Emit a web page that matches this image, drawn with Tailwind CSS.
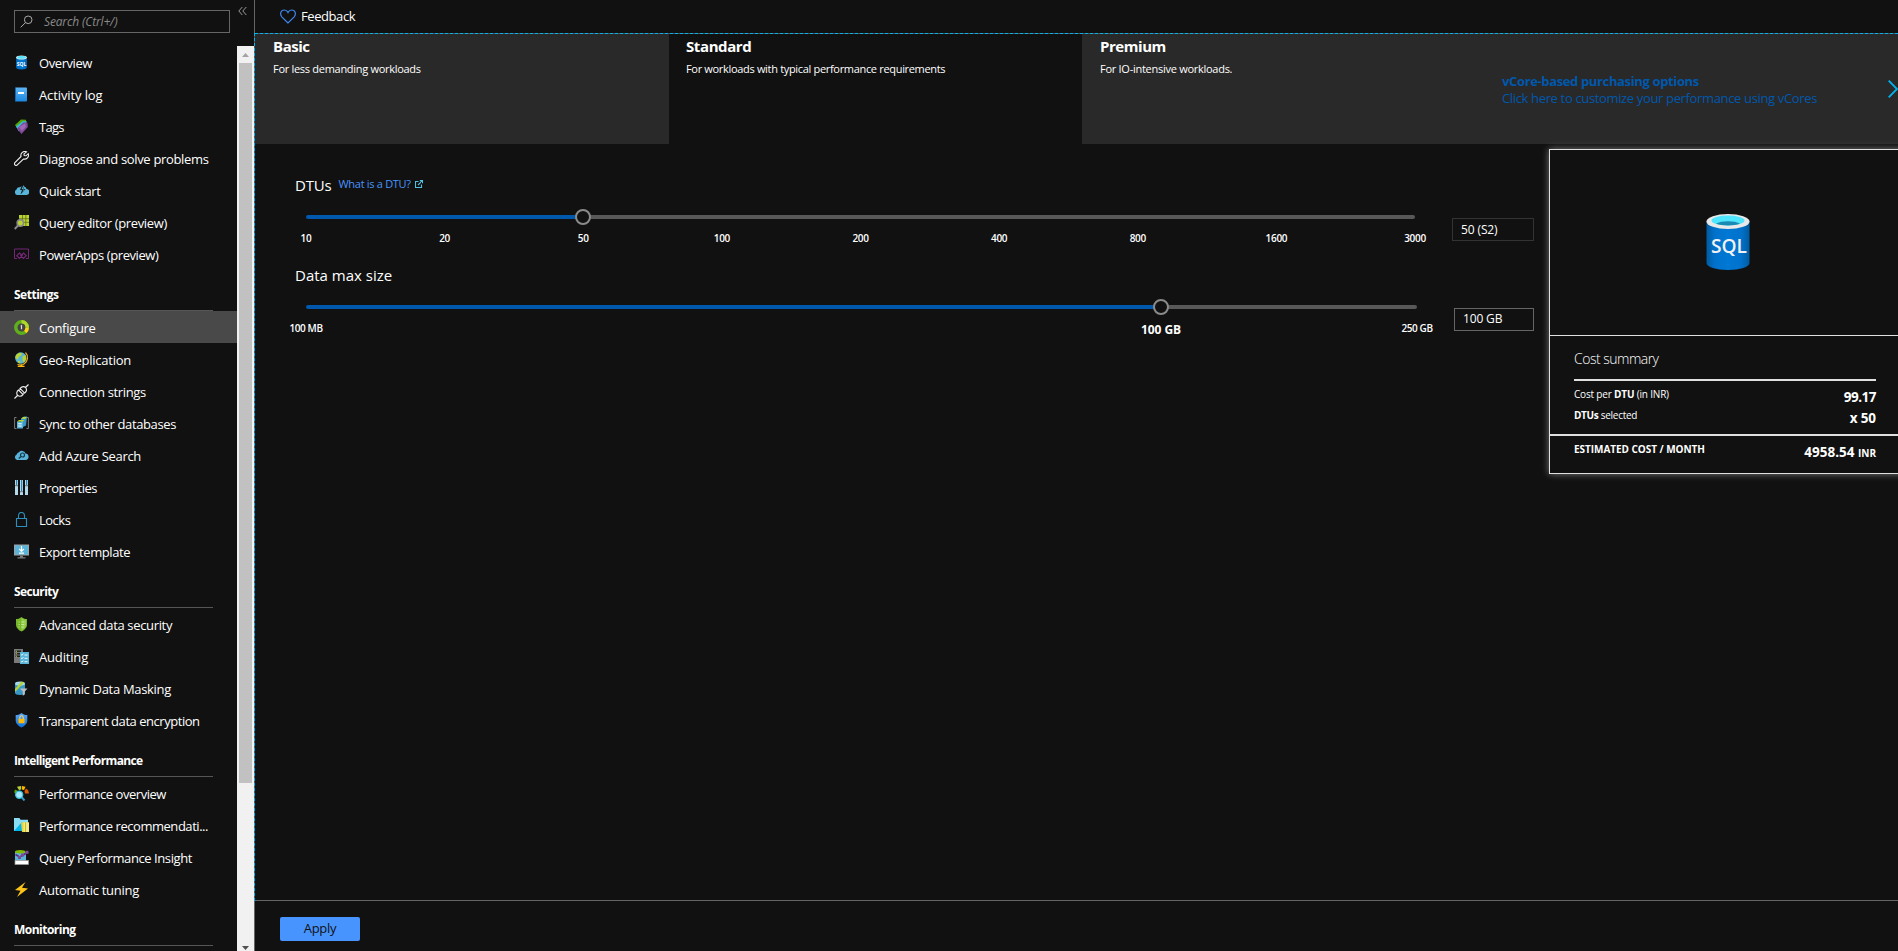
<!DOCTYPE html>
<html lang="en">
<head>
<meta charset="utf-8">
<title>Configure</title>
<script src="https://cdn.jsdelivr.net/npm/@tailwindcss/browser@4"></script>
</head>
<body class="h-[951px] w-[1898px] overflow-hidden bg-[#111] font-['Open_Sans','Noto_Sans',sans-serif] text-[13px] text-white">
<svg class="absolute size-0">
  <defs>
    <linearGradient id="cyl"><stop offset="0" stop-color="#005ba1"/><stop offset=".2" stop-color="#0072cc"/><stop offset=".5" stop-color="#0078d4"/><stop offset=".8" stop-color="#0072cc"/><stop offset="1" stop-color="#005ba1"/></linearGradient>
    <linearGradient id="blue" x2="0" y2="1"><stop offset="0" stop-color="#5eb5f5"/><stop offset="1" stop-color="#1b86df"/></linearGradient>
    <linearGradient id="shield" x2="0" y2="1"><stop offset="0" stop-color="#5ea8f5"/><stop offset="1" stop-color="#0b6fd8"/></linearGradient>
  </defs>
</svg>
<div class="flex h-full">
  <nav class="flex w-[254px] shrink-0 flex-col">
    <div class="flex h-[46px] shrink-0 items-start">
      <div class="mt-[10px] ml-[14px] flex h-[23px] w-[216px] items-center border border-[#666] pl-[5px]">
        <svg class="size-[13px]" viewBox="0 0 13 13" fill="none" stroke="#aaa"><circle cx="8.2" cy="4.8" r="3.8"/><path d="M5.5 7.6L.7 12.3"/></svg>
        <span class="ml-[11px] text-[12px] italic tracking-[-0.15px] text-[#8a8a8a]">Search (Ctrl+/)</span>
      </div>
      <svg class="mt-[6px] ml-[8px] h-[10px] w-[9px]" viewBox="0 0 9 10" fill="none" stroke="#999"><path d="M4.3 1L.8 5l3.500 4M8.300 1L4.800 5l3.500 4"/></svg>
    </div>
    <div class="flex min-h-0 flex-1">
      <div class="w-[237px] shrink-0 overflow-hidden whitespace-nowrap [&_svg]:mr-[10px] [&_svg]:size-[15px] [&_svg]:shrink-0">
        <div class="flex h-8 items-center pl-[14px]">
          <svg viewBox="0 0 15 15"><path d="M2 2.500v10c0 1.200 2.400 2 5.500 2s5.500-.8 5.500-2v-10z" fill="url(#cyl)"/><ellipse cx="7.500" cy="2.500" rx="5.500" ry="2" fill="#e8e8e8"/><ellipse cx="7.500" cy="2.400" rx="4.300" ry="1.300" fill="#50e6ff"/><text x="7.500" y="10.600" font-size="5" font-weight="700" fill="#fff" text-anchor="middle">SQL</text></svg>
          <span class="pt-[3px] tracking-[-0.42px]">Overview</span></div>
        <div class="flex h-8 items-center pl-[14px]">
          <svg viewBox="0 0 15 15"><rect x="1" y=".5" width="12" height="14" rx="1" fill="url(#blue)"/><path d="M1 1.500v12q0 1 1 1V.5Q1 .5 1 1.500z" fill="#0f6cbd"/><rect x="4" y="5" width="6" height="2" fill="#fff"/></svg>
          <span class="pt-[3px] tracking-[-0.11px]">Activity log</span></div>
        <div class="flex h-8 items-center pl-[14px]">
          <svg viewBox="0 0 15 15"><path d="M1 6L7 .5l5 .2.3 3L5 12z" fill="#57a300"/><path d="M2 7.500L9 2l4 .5L5 12.500z" fill="#32bedd"/><path d="M3 9.500L9.500 3.300l4 .4.300 4.300L7.500 15z" fill="#804998"/><path d="M5 8l6-3.500 1 3L8 12z" fill="#a067b8"/></svg>
          <span class="pt-[3px] tracking-[-0.7px]">Tags</span></div>
        <div class="flex h-8 items-center pl-[14px]">
          <svg viewBox="0 0 15 15" fill="none" stroke="#eee" stroke-width="1.100"><path d="M12.500.8A4 4 0 0 0 7 5.500L.9 11.600a1.600 1.600 0 0 0 2.400 2.300L9.400 8A4 4 0 0 0 14.200 2.700L12 4.800l-1.800-.2L10 2.900z"/></svg>
          <span class="pt-[3px] tracking-[-0.33px]">Diagnose and solve problems</span></div>
        <div class="flex h-8 items-center pl-[14px]">
          <svg viewBox="0 0 15 15"><path d="M3 12a3 3 0 0 1-.500-5.500A3 3 0 0 1 6 4.300 4 4 0 0 1 12.600 6 3 3 0 0 1 12 12z" fill="#59b4d9"/><path d="M8.500 1.500L6 7h2l-1.500 4.500L11.500 6H9.300L11 1.500z" fill="#111"/><path d="M9.300 2.500L7.500 6.200h1.800L8.300 9l2.200-2.500H8.800L10.200 2.500z" fill="#59b4d9"/></svg>
          <span class="pt-[3px] tracking-[-0.39px]">Quick start</span></div>
        <div class="flex h-8 items-center pl-[14px]">
          <svg viewBox="0 0 15 15"><path d="M5 0h10v11H5z" fill="#b8d432"/><path d="M8.500 0v11M11.800 0v11M5 3.700h10M5 7.300h10" stroke="#5f7015" stroke-width=".8"/><circle cx="6.300" cy="8" r="3.200" fill="#b8d432" stroke="#888" stroke-width="1.500"/><path d="M4 10.500L.7 14" stroke="#888" stroke-width="2"/></svg>
          <span class="pt-[3px] tracking-[-0.35px]">Query editor (preview)</span></div>
        <div class="flex h-8 items-center pl-[14px]">
          <svg viewBox="0 0 15 15" fill="none" stroke="#742774" stroke-width="1"><path d="M3 11.500H.5v-9.500h14v9.500H12"/><path d="M5.500 6L8.200 8.700 5.500 11.400 2.800 8.700zM9.500 6l2.700 2.700-2.700 2.700-2.700-2.700z" stroke-width="1.200"/></svg>
          <span class="pt-[3px] tracking-[-0.42px]">PowerApps (preview)</span></div>

        <div class="ml-[14px] flex h-[41px] w-[199px] items-center border-b border-[#555] pt-[9px] text-[12px] font-bold tracking-[-0.49px]">Settings</div>
        <div class="flex h-8 items-center bg-[#494949] pl-[14px]">
          <svg viewBox="0 0 15 15" fill="none"><circle cx="7.500" cy="7.500" r="5.700" stroke="#5fae1b" stroke-width="3.600"/><path d="M7.500 1.800a5.700 5.700 0 0 1 5.700 5.700" stroke="#b0d62b" stroke-width="3.600"/><path d="M13.200 7.500a5.700 5.700 0 0 1-2 4.300" stroke="#fcd116" stroke-width="3.600"/><circle cx="7.500" cy="7.500" r="3.700" fill="#444"/><path d="M6.700 6.200l.8-.5v3.600" stroke="#ddd" stroke-width="1.200"/></svg>
          <span class="pt-[3px] tracking-[-0.3px]">Configure</span></div>
        <div class="flex h-8 items-center pl-[14px]">
          <svg viewBox="0 0 15 15"><circle cx="6.800" cy="6" r="5.700" fill="#59b4d9"/><path d="M2 3l3-2.300 3 .5-1 2.500-2 .8-1 3L1.300 6zM8.500 4.500l3-1.500.7 4-2.200 3.500-1.500-2zM4 8.500l2.500 1-.5 2-2-.8z" fill="#b8d432"/><path d="M11.500.5a7.500 7.500 0 0 1-1.500 11.500 6 6 0 0 1-6.500.3" fill="none" stroke="#e8a817" stroke-width="1.200"/><path d="M6.500 12.500h1.500v1.300h2.500v1.200h-6.800v-1.200h2.800z" fill="#fcb813"/></svg>
          <span class="pt-[3px] tracking-[-0.25px]">Geo-Replication</span></div>
        <div class="flex h-8 items-center pl-[14px]">
          <svg viewBox="0 0 15 15" fill="none" stroke="#eee" stroke-width="1.100"><path d="M.5 14.500l3-3M11.500 3.500l3-3M4.500 6l4.600 4.600c-1.600 1.700-4 2-5.600.7-1.300-1.600-.9-3.800 1-5.300zM6 4.400c1.800-1.900 4.200-2 5.600-.9 1.200 1.500 1 3.900-.9 5.600zM5.500 5.800l1.500-1M9.400 9.500l1.200-1.200"/></svg>
          <span class="pt-[3px] tracking-[-0.35px]">Connection strings</span></div>
        <div class="flex h-8 items-center pl-[14px]">
          <svg viewBox="0 0 15 15"><path d="M2.500 1.500H.6v11h1.900M12.500 1.500h1.900v11h-1.900" fill="none" stroke="#7a7a7a" stroke-width="1"/><path d="M7 2.500l3-2h3l-1 9-3 1.500H6.500z" fill="#3999c6"/><path d="M7 2.700L9 1h3.800L11 3z" fill="#b8d432"/><path d="M3 5.500h6v7H3z" fill="#59b4d9"/><path d="M3 5.500L5 4h5.300L9 5.500z" fill="#b8d432"/><path d="M4.200 7.800h3.500M4.200 10h3.500" stroke="#fff"/></svg>
          <span class="pt-[3px] tracking-[-0.36px]">Sync to other databases</span></div>
        <div class="flex h-8 items-center pl-[14px]">
          <svg viewBox="0 0 15 15"><path d="M3 12a3 3 0 0 1-.300-5.600A3 3 0 0 1 5 4.300 3.700 3.700 0 0 1 11.500 5.500 3.300 3.300 0 0 1 12 12z" fill="#59b4d9"/><circle cx="8.500" cy="7" r="2" fill="none" stroke="#15394a" stroke-width="1.200"/><path d="M7 8.500L4.800 10.500" stroke="#15394a" stroke-width="1.400"/></svg>
          <span class="pt-[3px] tracking-[-0.31px]">Add Azure Search</span></div>
        <div class="flex h-8 items-center pl-[14px]">
          <svg viewBox="0 0 15 15"><path d="M1 0h3v15H1zM6 0h3v15H6zM11 0h3v15h-3z" fill="#b5d9ea"/><path d="M2 0h1.200v5H2zM7 0h1.200v11H7zM12 0h1.200v5H12z" fill="#2c86b3"/><path d="M1 5h3v1.300H1zM6 11h3v1.300H6zM11 5h3v1.300h-3z" fill="#7a8a92"/></svg>
          <span class="pt-[3px] tracking-[-0.49px]">Properties</span></div>
        <div class="flex h-8 items-center pl-[14px]">
          <svg viewBox="0 0 15 15" fill="none" stroke="#2d8fbd" stroke-width="1.100"><path d="M2.500 6.500h10v8h-10zM4.500 6.500V4q0-3.500 3-3.500t3 3.500v2.500"/></svg>
          <span class="pt-[3px] tracking-[-0.5px]">Locks</span></div>
        <div class="flex h-8 items-center pl-[14px]">
          <svg viewBox="0 0 15 15"><path d="M0 .5h15v11H0z" fill="#a0a1a2"/><path d="M1 1.500h13v9H1z" fill="#59b4d9"/><path d="M7.500 2v5M5.200 5l2.300 2.300L9.800 5M5 9.200h5" fill="none" stroke="#fff" stroke-width="1.200"/><path d="M6 11.500h3v1.700h2.500v1.300h-8v-1.300H6z" fill="#7a7a7a"/></svg>
          <span class="pt-[3px] tracking-[-0.43px]">Export template</span></div>

        <div class="ml-[14px] flex h-[41px] w-[199px] items-center border-b border-[#555] pt-[9px] text-[12px] font-bold tracking-[-0.6px]">Security</div>
        <div class="flex h-8 items-center pl-[14px]">
          <svg viewBox="0 0 15 15"><path d="M7.500 0C9.500 1.800 11.500 2 13 2v5.500c0 3.500-3 5.800-5.500 7C5 13.300 2 11 2 7.500V2c1.500 0 3.500-.2 5.500-2z" fill="#76b82a"/><path d="M7.500 1C9 2.300 10.700 2.700 12 2.800v4.700c0 2.900-2.500 4.900-4.500 5.900z" fill="#96cc4b"/><path d="M7.300 5h3M7.300 7.500h3M7.300 10h2.500M4.600 5h1M4.600 7.500h1M4.600 10h1" stroke="#c8e89a"/></svg>
          <span class="pt-[3px] tracking-[-0.34px]">Advanced data security</span></div>
        <div class="flex h-8 items-center pl-[14px]">
          <svg viewBox="0 0 15 15"><path d="M0 0h9v14H0z" fill="#7a7a7a"/><path d="M1.500 1.500h5.500v1.500H1.500zM1.500 4h5.500v1.500H1.500zM1.500 6.500h5v1.500h-5z" fill="#222"/><path d="M2 1.800h1v1H2zM2 4.300h1v1H2zM2 6.800h1v1H2z" fill="#b8d432"/><path d="M6 3h9v12H6z" fill="#59b4d9"/><path d="M7.200 5.500l.8.800 1.300-1.600M7.200 9l.8.800 1.300-1.600M7.200 12.400l.8.800 1.300-1.600M10.500 6h3M10.500 9.300h3M10.500 12.700h3" fill="none" stroke="#fff" stroke-width=".9"/></svg>
          <span class="pt-[3px] tracking-[-0.17px]">Auditing</span></div>
        <div class="flex h-8 items-center pl-[14px]">
          <svg viewBox="0 0 15 15"><path d="M1 2.500v9.500c0 1.300 2.200 2 5 2s5-.7 5-2V2.500z" fill="#3999c6"/><ellipse cx="6" cy="2.500" rx="5" ry="2" fill="#a5d8ee"/><path d="M1 8l6.500-7.500 2.500 1L3 9 1 11z" fill="#b8d432"/><path d="M6 7.500h7.500L10.800 10.500v3l-2 1.300v-4.300z" fill="#bcbec0"/></svg>
          <span class="pt-[3px] tracking-[-0.31px]">Dynamic Data Masking</span></div>
        <div class="flex h-8 items-center pl-[14px]">
          <svg viewBox="0 0 15 15"><path d="M7.500 0C9.500 1.800 11.500 2 13.300 2v5.500c0 3.500-3.300 5.800-5.800 7C5 13.300 1.700 11 1.700 7.500V2C3.500 2 5.500 1.800 7.500 0z" fill="url(#shield)"/><path d="M5.800 6V4.700q0-1.900 1.700-1.900t1.700 1.900V6" fill="none" stroke="#ffd76e" stroke-width="1.100"/><rect x="4.500" y="5.800" width="6" height="4.500" rx=".5" fill="#ffb900"/></svg>
          <span class="pt-[3px] tracking-[-0.46px]">Transparent data encryption</span></div>

        <div class="ml-[14px] flex h-[41px] w-[199px] items-center border-b border-[#555] pt-[9px] text-[12px] font-bold tracking-[-0.63px]">Intelligent Performance</div>
        <div class="flex h-8 items-center pl-[14px]">
          <svg viewBox="0 0 15 15"><path d="M0 6.500l1-3 2.500 1.300-.8 2.700z" fill="#57a300"/><path d="M3 .8L7 0v3.500L5 4z" fill="#b8d432"/><path d="M7.800 0l3.700.8L10 4l-2.200-.5z" fill="#ffb900"/><path d="M12 2.500l2.200 1.800L15 7.500h-4L10.500 5z" fill="#dd5900"/><path d="M7.500 11l3 3.500" stroke="#3999c6" stroke-width="2"/><circle cx="5.200" cy="8.700" r="3.600" fill="#a5e5fb" stroke="#32bedd" stroke-width="1.200"/></svg>
          <span class="pt-[3px] tracking-[-0.46px]">Performance overview</span></div>
        <div class="flex h-8 items-center pl-[14px]">
          <svg viewBox="0 0 15 15"><path d="M0 0h5.500l1 1.700H14V13H0z" fill="#8adcf5"/><path d="M0 13L8 4v9z" fill="#00b4ec"/><path d="M7 4.500h8V14H8z" fill="#e5d33a"/><path d="M9.500 4.500H15V14H9.500z" fill="#f2e98a"/><path d="M11.500 4.500V14" stroke="#cdb917"/></svg>
          <span class="pt-[3px] tracking-[-0.46px]">Performance recommendati...</span></div>
        <div class="flex h-8 items-center pl-[14px]">
          <svg viewBox="0 0 15 15"><path d="M1 2v9.500h11V2z" fill="#59b4d9"/><ellipse cx="6.200" cy="1.800" rx="5.200" ry="1.700" fill="#7fba00"/><path d="M1.500 4.500L5.500 7l3-1.500L14 2" fill="none" stroke="#68217a" stroke-width="1.500"/><path d="M4 6h3v3H4zM11.500.8h3v3h-3zM7 3.500h3v3H7z" fill="#804998"/><rect x="1" y="10.500" width="13.500" height="4" fill="#fff" stroke="#999" stroke-width=".7"/></svg>
          <span class="pt-[3px] tracking-[-0.42px]">Query Performance Insight</span></div>
        <div class="flex h-8 items-center pl-[14px]">
          <svg viewBox="0 0 15 15"><path d="M11.500 0L1 8l5.500.8L3 15l11-8.500-6-.8z" fill="#fcc419"/></svg>
          <span class="pt-[3px] tracking-[-0.27px]">Automatic tuning</span></div>

        <div class="ml-[14px] flex h-[41px] w-[199px] items-center border-b border-[#555] pt-[9px] text-[12px] font-bold tracking-[-0.52px]">Monitoring</div>
      </div>
      <div class="flex w-[17px] flex-col items-center bg-[#f1f1f1]">
        <div class="flex h-[17px] shrink-0 items-center"><svg class="h-1 w-[7px]" viewBox="0 0 7 4"><path d="M3.500 0L7 4H0z" fill="#a3a3a3"/></svg></div>
        <div class="h-[720px] w-[13px] shrink-0 bg-[#c1c1c1]"></div>
        <div class="mt-auto flex h-[5px] shrink-0 items-start"><svg class="h-1 w-[7px]" viewBox="0 0 7 4"><path d="M3.500 4L7 0H0z" fill="#505050"/></svg></div>
      </div>
    </div>
  </nav>

  <div class="flex w-px shrink-0 flex-col">
    <div class="h-[33px] bg-[#666]"></div>
    <div class="h-[868px] bg-[repeating-linear-gradient(180deg,#00b4f0_0_3px,#555_3px_5px)]"></div>
    <div class="flex-1 bg-[#666]"></div>
  </div>

  <main class="flex w-[1643px] shrink-0 flex-col">
    <div class="flex h-[33px] shrink-0 items-center pl-[25px]">
      <svg class="h-[15px] w-4" viewBox="0 0 16 15" fill="none" stroke="#3f87ee" stroke-width="1.200"><path d="M8 14L1.800 7.800C-.5 5 .8 1 4.200 1 6 1 7.300 2 8 3.500 8.700 2 10 1 11.800 1c3.400 0 4.700 4 2.400 6.800z"/></svg>
      <span class="ml-[5px] tracking-[-0.42px]">Feedback</span>
    </div>
    <div class="h-px shrink-0 bg-[repeating-linear-gradient(90deg,#00b4f0_0_3px,#555_3px_5px)]"></div>
    <div class="flex h-[110px] shrink-0">
      <section class="w-[414px] bg-[#292929] pt-[2px] pl-[18px]">
        <h2 class="text-[15px] leading-5 font-bold tracking-[-0.45px]">Basic</h2>
        <p class="mt-[5px] text-[11px] leading-4 tracking-[-0.29px]">For less demanding workloads</p>
      </section>
      <section class="w-[413px] pt-[2px] pl-[17px]">
        <h2 class="text-[15px] leading-5 font-bold tracking-[-0.4px]">Standard</h2>
        <p class="mt-[5px] text-[11px] leading-4 tracking-[-0.32px]">For workloads with typical performance requirements</p>
      </section>
      <section class="flex flex-1 bg-[#292929] pl-[18px]">
        <div class="w-[402px] pt-[2px]">
          <h2 class="text-[15px] leading-5 font-bold tracking-[-0.45px]">Premium</h2>
          <p class="mt-[5px] text-[11px] leading-4 tracking-[-0.27px]">For IO-intensive workloads.</p>
        </div>
        <div class="w-[386px] pt-[39px] leading-[17px] text-[#0058ad]">
          <p class="font-bold tracking-[-0.36px]">vCore-based purchasing options</p>
          <p class="tracking-[-0.35px]">Click here to customize your performance using vCores</p>
        </div>
        <svg class="mt-[46px] h-[18px] w-[10px]" viewBox="0 0 10 18" fill="none" stroke="#00b4f0" stroke-width="1.800"><path d="M.7.7L9 9 .7 17.300"/></svg>
      </section>
    </div>

    <div class="flex h-[756px] shrink-0 items-start">
      <div class="w-[1294px] shrink-0 pt-[31px] pl-[40px]">
        <div class="flex h-5 items-center">
          <h3 class="text-[15px] tracking-[-0.18px]">DTUs</h3>
          <a class="mb-[2px] ml-[7px] text-[11px] tracking-[-0.3px] text-[#4894fe]">What is a DTU?</a>
          <svg class="mb-[2px] ml-[4px] size-2" viewBox="0 0 8 8" fill="none" stroke="#50c0e0" stroke-width="1.100"><path d="M3.500 1.500h-3v6h6v-3M4.800.6h2.700v2.700M7.300.8L3 5"/></svg>
        </div>
        <div class="flex items-start">
          <div class="mt-[20px] ml-[11px] w-[1109px]">
            <div class="relative flex h-1">
              <div class="w-1/4 rounded-l-sm bg-[#0058ad]"></div><div class="flex-1 rounded-r-sm bg-[#585858]"></div>
              <div class="absolute -top-[6px] left-1/4 size-4 -translate-x-1/2 rounded-full border-2 border-[#8a8a8a] bg-[#111]"></div>
            </div>
            <div class="mt-[12px] flex h-[14px] justify-between text-[10px] leading-[14px] font-semibold tracking-[-0.3px] *:flex *:w-0 *:justify-center">
              <span>10</span><span>20</span><span>50</span><span>100</span><span>200</span><span>400</span><span>800</span><span>1600</span><span>3000</span>
            </div>
          </div>
          <div class="mt-[23px] ml-[37px] flex h-[23px] w-[82px] items-center border border-[#333] pl-2 text-[12px] tracking-[-0.12px]">50 (S2)</div>
        </div>
        <h3 class="mt-[20px] text-[15px] leading-5">Data max size</h3>
        <div class="flex items-start">
          <div class="mt-[20px] ml-[11px] w-[1111px]">
            <div class="relative flex h-1">
              <div class="w-[855px] rounded-l-sm bg-[#0058ad]"></div><div class="flex-1 rounded-r-sm bg-[#585858]"></div>
              <div class="absolute -top-[6px] left-[855px] size-4 -translate-x-1/2 rounded-full border-2 border-[#8a8a8a] bg-[#111]"></div>
            </div>
            <div class="mt-[12px] flex h-[14px] text-[10px] leading-[14px] font-semibold tracking-[-0.4px] whitespace-nowrap *:flex *:w-0 *:justify-center">
              <span>100&nbsp;MB</span><span class="ml-[855px] pt-[2px] text-[12px] font-bold tracking-[-0.08px]">100 GB</span><span class="ml-[256px]">250 GB</span>
            </div>
          </div>
          <div class="mt-[23px] ml-[37px] flex h-[23px] w-[80px] items-center border border-[#666] pb-[2px] pl-2 text-[12px] tracking-[-0.15px]">100 GB</div>
        </div>
      </div>

      <aside class="mt-[5px] h-[325px] w-[360px] shrink-0 border border-[#e0e0e0] shadow-[0_0_7px_rgba(255,255,255,.45)]">
        <div class="flex h-[186px] border-b border-[#e0e0e0] pt-[62px] pl-[156px]">
          <svg class="h-[59px] w-11" viewBox="0 0 44 59"><path d="M.5 9v42c0 4 9.500 7 21.500 7s21.500-3 21.500-7V9z" fill="url(#cyl)"/><ellipse cx="22" cy="9.500" rx="21.500" ry="7.500" fill="#e8e8e8"/><ellipse cx="22" cy="8.500" rx="16.500" ry="5" fill="#50e6ff"/><path d="M10 11.700c5-3.300 19-3.300 24 0-6 2.300-18 2.300-24 0z" fill="#198ab3"/><text x="23" y="40.500" font-size="19.500" font-weight="600" textLength="36" lengthAdjust="spacingAndGlyphs" fill="#f2f2f2" text-anchor="middle">SQL</text></svg>
        </div>
        <div class="ml-6 w-[302px]">
          <h4 class="flex h-[45px] items-center border-b-2 border-[#e0e0e0] pt-px text-[14px] font-light tracking-[-0.5px]">Cost summary</h4>
          <div class="flex h-[25px] justify-between pt-1">
            <p class="pt-[2px] text-[10px] leading-[14px] tracking-[-0.18px]">Cost per <b>DTU</b> (in INR)</p><b class="pt-[3px] text-[13.5px] leading-[18px] tracking-[-0.5px]">99.17</b>
          </div>
          <div class="flex h-[28px] justify-between">
            <p class="pt-[2px] text-[10px] leading-[14px] tracking-[-0.3px]"><b>DTUs</b> selected</p><b class="pt-[3px] text-[13.5px] leading-[18px] tracking-[-0.1px]">x 50</b>
          </div>
        </div>
        <div class="border-t-2 border-[#e0e0e0] pl-6">
          <div class="flex w-[302px] justify-between pt-[6px]">
            <b class="text-[10px] leading-[14px] tracking-[-0.04px]">ESTIMATED COST / MONTH</b>
            <b class="text-[13.5px] leading-[20px]">4958.54 <span class="text-[10px]">INR</span></b>
          </div>
        </div>
      </aside>
    </div>

    <footer class="flex h-[51px] shrink-0 items-start border-t border-[#666] pt-4 pl-[25px]">
      <button class="h-6 w-20 rounded-xs bg-[#4894fe] tracking-[-0.3px] text-[#111]">Apply</button>
    </footer>
  </main>
</div>
</body>
</html>
